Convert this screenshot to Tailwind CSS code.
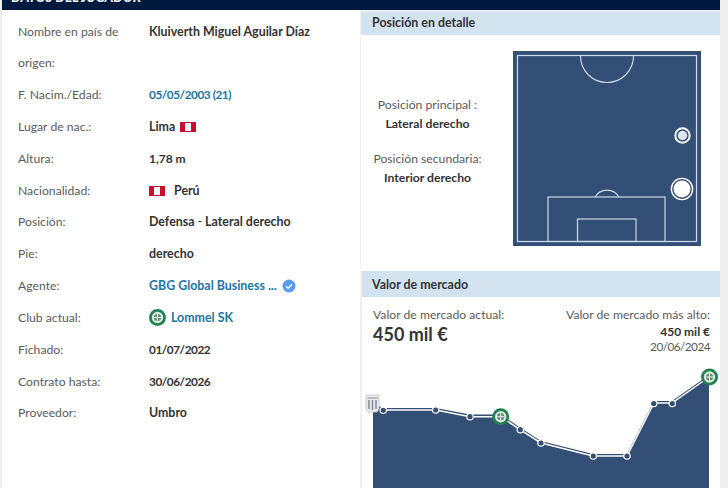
<!DOCTYPE html>
<html lang="es">
<head>
  <meta charset="UTF-8" />
  <title>Datos del jugador</title>
  <script src="https://cdn.jsdelivr.net/npm/@tailwindcss/browser@4"></script>
</head>
<body class="bg-[#eeeeee] w-[728px] h-[488px] overflow-hidden font-['Lato',sans-serif] text-[12.2px] text-[#333333]">
  <div class="ml-[2px] w-[718px]">
    <!-- Page header, cut off by the top of the window -->
    <div class="h-[10px] bg-[#00193f] overflow-hidden pl-[9px]">
      <h2 class="-mt-[12px] text-[12.5px] leading-[20px] font-bold text-white uppercase">Datos del jugador</h2>
    </div>

    <div class="flex h-[478px]">
      <!-- Player data -->
      <section class="w-[358px] bg-white pt-[5.5px] pl-[16px] shrink-0">
        <div class="grid grid-cols-[131px_1fr] auto-rows-[31.83px] items-center leading-[31.83px] font-bold text-[12.4px]">
          <div class="row-span-2 self-start font-normal text-[12.2px] text-[#5b5b5b] pr-[8px]">Nombre en país de origen:</div>
          <div class="row-span-2 self-start">Kluiverth Miguel Aguilar Díaz</div>

          <div class="font-normal text-[12.2px] text-[#5b5b5b]">F. Nacim./Edad:</div>
          <div class="text-[#1d75a3] text-[11.8px] tracking-[-0.45px]">05/05/2003 (21)</div>

          <div class="font-normal text-[12.2px] text-[#5b5b5b]">Lugar de nac.:</div>
          <div class="flex items-center gap-[5px]">Lima
            <span class="flex w-[16px] h-[10px] bg-[#c8102e]"><span class="w-[6px] h-[8px] mx-auto mt-[1px] bg-white"></span></span>
          </div>

          <div class="font-normal text-[12.2px] text-[#5b5b5b]">Altura:</div>
          <div class="text-[12px]">1,78 m</div>

          <div class="font-normal text-[12.2px] text-[#5b5b5b]">Nacionalidad:</div>
          <div class="flex items-center gap-[9px]">
            <span class="flex w-[16px] h-[10px] bg-[#c8102e]"><span class="w-[6px] h-[8px] mx-auto mt-[1px] bg-white"></span></span>
            Perú
          </div>

          <div class="font-normal text-[12.2px] text-[#5b5b5b]">Posición:</div>
          <div>Defensa <span class="font-normal">-</span> Lateral derecho</div>

          <div class="font-normal text-[12.2px] text-[#5b5b5b]">Pie:</div>
          <div>derecho</div>

          <div class="font-normal text-[12.2px] text-[#5b5b5b]">Agente:</div>
          <div class="flex items-center gap-[5px] text-[#1d75a3]">GBG Global Business ...
            <svg width="14" height="14" viewBox="0 0 14 14"><circle cx="7" cy="7" r="6.5" fill="#5b9cf0"/><path d="M4 7.2l2.1 2L10 5.2" fill="none" stroke="#fff" stroke-width="1.4"/></svg>
          </div>

          <div class="font-normal text-[12.2px] text-[#5b5b5b]">Club actual:</div>
          <div class="flex items-center gap-[5px] text-[#1d75a3]">
            <svg width="17" height="17" viewBox="0 0 17 17"><circle cx="8.5" cy="8.5" r="8.5" fill="#21824f"/><circle cx="8.5" cy="8.5" r="5.7" fill="#dbe9e1"/><circle cx="8.5" cy="8.5" r="3.6" fill="#5f8f78"/><path d="M8.5 5v7M5 8.5h7" stroke="#fff" stroke-width="0.9"/></svg>
            Lommel SK
          </div>

          <div class="font-normal text-[12.2px] text-[#5b5b5b]">Fichado:</div>
          <div class="text-[11.8px] tracking-[-0.45px]">01/07/2022</div>

          <div class="font-normal text-[12.2px] text-[#5b5b5b]">Contrato hasta:</div>
          <div class="text-[11.8px] tracking-[-0.45px]">30/06/2026</div>

          <div class="font-normal text-[12.2px] text-[#5b5b5b]">Proveedor:</div>
          <div>Umbro</div>
        </div>
      </section>

      <div class="w-[1px] bg-[#f2f2f2] shrink-0"></div>

      <!-- Right column -->
      <div class="flex-1 flex flex-col">
        <section class="bg-white h-[261px] pt-[2px] bg-clip-content">
          <h3 class="h-[23px] bg-[#d2e2ee] pl-[11px] leading-[22px] font-bold text-[12.4px]">Posición en detalle</h3>
          <div class="flex pt-[16px]">
            <div class="w-[133px] mr-[19px] pt-[44px] text-center leading-[19px] shrink-0">
              <p class="text-[#5b5b5b]">Posición principal :</p>
              <p class="font-bold">Lateral derecho</p>
              <p class="text-[#5b5b5b] mt-[16px]">Posición secundaria:</p>
              <p class="font-bold">Interior derecho</p>
            </div>
            <svg width="188" height="195" viewBox="0 0 188 195" class="block">
              <rect width="188" height="195" fill="#344f76"/>
              <g fill="none" stroke="#c9dbec" stroke-width="1.2">
                <rect x="4.5" y="4.5" width="179" height="186"/>
                <path d="M67.5 5a26.5 26.5 0 0 0 53 0"/>
                <rect x="35" y="146" width="117" height="44.5"/>
                <rect x="64.5" y="168" width="58.5" height="22.5"/>
                <path d="M82 146a14 14 0 0 1 24 0"/>
              </g>
              <circle cx="169.5" cy="84.5" r="7.2" fill="#344f76" stroke="#fff" stroke-width="2"/>
              <circle cx="169.5" cy="84.5" r="4.7" fill="#dfe8f1"/>
              <circle cx="169" cy="138" r="11.3" fill="#fff"/>
              <circle cx="169" cy="138" r="9.2" fill="#fff" stroke="#344f76" stroke-width="1.4"/>
            </svg>
          </div>
        </section>

        <section class="pl-[1px] bg-[#eeeeee] h-[217px] relative">
          <div class="bg-white h-full">
            <h3 class="h-[26px] bg-[#d2e2ee] pl-[10px] leading-[28px] font-bold text-[12.4px]">Valor de mercado</h3>
            <div class="flex justify-between pl-[11px] pr-[10px] pt-[8px]">
              <div>
                <p class="leading-[19px] text-[#5b5b5b]">Valor de mercado actual:</p>
                <p class="text-[18px] leading-[20px] font-bold">450 mil €</p>
              </div>
              <div class="text-right leading-[15px]">
                <p class="leading-[19px] text-[#5b5b5b]">Valor de mercado más alto:</p>
                <p class="font-bold text-[12px]">450 mil €</p>
                <p class="text-[#5b5b5b] text-[11.8px] tracking-[-0.55px]">20/06/2024</p>
              </div>
            </div>
          </div>
          <svg width="368" height="130" viewBox="360 358 368 130" class="absolute -left-[1px] top-[87px]">
            <polygon points="373,403 383,408 436,408 470,414.5 501,414.5 520,427.5 541,441 593,454 627,454 654,401 672,401 709,375 709,488 373,488" fill="#344f76"/>
            <polyline points="383,410 436,410 470,416.7 501,416.7 520,429.7 541,443 593,456 627,456 654,403 672,403 709,377" fill="none" stroke="#fff" stroke-width="1.5"/>
            <g fill="#344f76" stroke="#fff" stroke-width="1.2">
              <circle cx="383.3" cy="410.3" r="3.2"/>
              <circle cx="435.7" cy="410" r="3.2"/>
              <circle cx="470" cy="416.7" r="3.2"/>
              <circle cx="520.3" cy="429.7" r="3.2"/>
              <circle cx="541" cy="443" r="3.2"/>
              <circle cx="593.3" cy="456" r="3.2"/>
              <circle cx="627" cy="456" r="3.2"/>
              <circle cx="653.7" cy="403.5" r="3.2"/>
              <circle cx="672.3" cy="403.5" r="3.2"/>
            </g>
            <!-- Alianza Lima crest -->
            <path d="M366 395h13v14l-2 3h-9l-2-3z" fill="#e8eaee" stroke="#c0c4cc" stroke-width="0.8"/>
            <path d="M367.5 398h10" stroke="#9a9fa8" stroke-width="1.2"/>
            <path d="M369 400v9M372.5 400v10M376 400v9" stroke="#7d828c" stroke-width="1.4"/>
            <circle cx="500.7" cy="416.7" r="8.5" fill="#21824f"/>
            <circle cx="500.7" cy="416.7" r="5.7" fill="#dbe9e1"/>
            <circle cx="500.7" cy="416.7" r="3.6" fill="#5f8f78"/>
            <path d="M497.2 416.7h7M500.7 413.2v7" stroke="#fff" stroke-width="0.9"/>
            <circle cx="709.5" cy="377" r="8.5" fill="#21824f"/>
            <circle cx="709.5" cy="377" r="5.7" fill="#dbe9e1"/>
            <circle cx="709.5" cy="377" r="3.6" fill="#5f8f78"/>
            <path d="M706 377h7M709.5 373.5v7" stroke="#fff" stroke-width="0.9"/>
          </svg>
        </section>
      </div>
    </div>
  </div>
</body>
</html>
